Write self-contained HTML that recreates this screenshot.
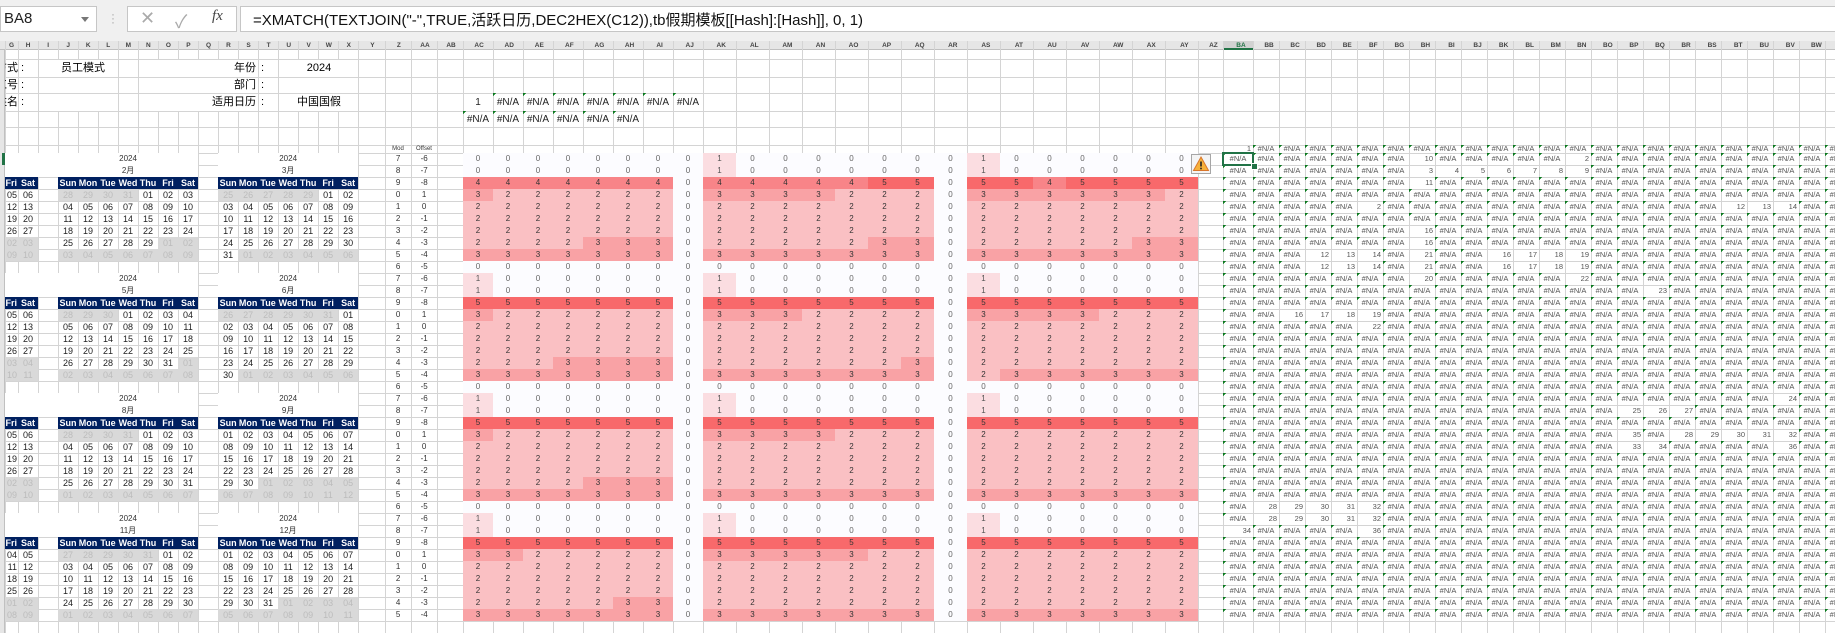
<!DOCTYPE html>
<html><head><meta charset="utf-8"><style>
body{margin:0;width:1835px;height:633px;overflow:hidden;position:relative;background:#fff;font-family:"Liberation Sans","Noto Sans CJK SC",sans-serif}
.a{position:absolute}
table{border-collapse:collapse;table-layout:fixed;position:absolute;border-spacing:0}
td{padding:0;overflow:hidden;white-space:nowrap;text-align:center}
#L td{font-size:9px;color:#222;height:12px;line-height:12px}
#L .y{font-size:8px;color:#333;background:#fff}
#L .wb{background:#fff}
#L tr.h td{background:#002060;color:#fff;font-weight:bold}
#L tr.h td.w{background:transparent;color:#333;font-weight:normal}
#L .x{background:#d9d9d9;color:#bcbcbc}
#L .g{text-align:right;padding-right:1px}
#L .m{font-size:8px;color:#333}
#H td{height:12px;font-size:8px;line-height:12px;background:#fcfcff;color:#666}
#H .b{background:#fbdde1;color:#555}#H .c{background:#fac0c3;color:#333}#H .d{background:#f9a2a5;color:#333}#H .e{background:#f88488;color:#333}#H .f{background:#f8696b;color:#333}
#R td{font-size:7.5px;color:#555;height:12px;line-height:12px;background:linear-gradient(135deg,#0a7a1e 0,#0a7a1e 2.2px,transparent 2.3px)}
#R tr.t td{height:8px;line-height:8px}
#R .n{background:none;text-align:right;padding-right:2px}
#T td{font-size:10px;color:#222;background:linear-gradient(135deg,#0a7a1e 0,#0a7a1e 2.2px,transparent 2.3px)}
#T .n{background:none}
#C td{font-size:6.5px;font-weight:bold;color:#444;height:9px;line-height:9px}
.lb{font-size:11px;color:#000;line-height:16px}
</style></head><body>
<!-- chrome -->
<div class="a" style="left:0;top:0;width:1835px;height:41px;background:#f0f0f0"></div>
<div class="a" style="left:0;top:6px;width:95px;height:24px;background:#fff;border:1px solid #c6c6c6;font-size:15px;line-height:24px;text-indent:3px;color:#222">BA8<span class="a" style="left:80px;top:10px;width:0;height:0;border-left:4px solid transparent;border-right:4px solid transparent;border-top:5px solid #777"></span></div>
<div class="a" style="left:111px;top:12px;color:#aaa;font-size:12px;line-height:4px">·<br>·<br>·</div>
<div class="a" style="left:127px;top:6px;width:108px;height:24px;background:#fff;border:1px solid #c6c6c6"></div>
<div class="a" style="left:140px;top:8px;font-size:18px;color:#aaa">✕</div>
<div class="a" style="left:175px;top:8px;font-size:18px;color:#aaa">✓</div>
<div class="a" style="left:212px;top:8px;font-size:15px;color:#444;font-family:'Liberation Serif',serif;font-style:italic">fx</div>
<div class="a" style="left:240px;top:6px;width:1600px;height:24px;background:#fff;border:1px solid #c6c6c6"></div>
<div class="a" style="left:253px;top:9px;font-size:15px;color:#111;white-space:nowrap">=XMATCH(TEXTJOIN("-",TRUE,活跃日历,DEC2HEX(C12)),tb假期模板[[Hash]:[Hash]], 0, 1)</div>
<div class="a" style="left:0;top:41px;width:1835px;height:9px;background:#e6e6e6;border-bottom:1px solid #c0c0c0;box-sizing:border-box"></div>
<div class="a" style="left:1223px;top:41px;width:30px;height:9px;background:#d2d2d2;border-bottom:2px solid #217346;box-sizing:border-box"></div>
<div class="a" style="left:0;top:50px;width:5px;height:583px;background:#e6e6e6;border-right:1px solid #c0c0c0;box-sizing:border-box"></div>
<div class="a" style="left:2px;top:153px;width:3px;height:12px;background:#217346"></div>
<!-- grid -->
<svg class="a" style="left:0;top:0" width="1835" height="633" shape-rendering="crispEdges">
<g stroke="#d4d4d4" stroke-width="1">
<path d="M5.5 41V633M18.5 41V633M38.5 41V633M58.5 41V633M78.5 41V633M98.5 41V633M118.5 41V633M138.5 41V633M158.5 41V633M178.5 41V633M198.5 41V633M218.5 41V633M238.5 41V633M258.5 41V633M278.5 41V633M298.5 41V633M318.5 41V633M338.5 41V633M358.5 41V633M385.5 41V633M411.5 41V633M437.5 41V633M463.5 41V633M493.5 41V633M523.5 41V633M553.5 41V633M583.5 41V633M613.5 41V633M643.5 41V633M673.5 41V633M703.5 41V633M736.5 41V633M769.5 41V633M802.5 41V633M835.5 41V633M868.5 41V633M901.5 41V633M934.5 41V633M967.5 41V633M1000.5 41V633M1033.5 41V633M1066.5 41V633M1099.5 41V633M1132.5 41V633M1165.5 41V633M1198.5 41V633M1223.5 41V633M1253.5 41V633M1279.5 41V633M1305.5 41V633M1331.5 41V633M1357.5 41V633M1383.5 41V633M1409.5 41V633M1435.5 41V633M1461.5 41V633M1487.5 41V633M1513.5 41V633M1539.5 41V633M1565.5 41V633M1591.5 41V633M1617.5 41V633M1643.5 41V633M1669.5 41V633M1695.5 41V633M1721.5 41V633M1747.5 41V633M1773.5 41V633M1799.5 41V633M1825.5 41V633"/>
<path d="M5 59.5H1835M5 77.5H1835M5 93.5H1835M5 111.5H1835M5 127.5H1835M5 145.5H1835M5 153.5H1835M5 165.5H1835M5 177.5H1835M5 189.5H1835M5 201.5H1835M5 213.5H1835M5 225.5H1835M5 237.5H1835M5 249.5H1835M5 261.5H1835M5 273.5H1835M5 285.5H1835M5 297.5H1835M5 309.5H1835M5 321.5H1835M5 333.5H1835M5 345.5H1835M5 357.5H1835M5 369.5H1835M5 381.5H1835M5 393.5H1835M5 405.5H1835M5 417.5H1835M5 429.5H1835M5 441.5H1835M5 453.5H1835M5 465.5H1835M5 477.5H1835M5 489.5H1835M5 501.5H1835M5 513.5H1835M5 525.5H1835M5 537.5H1835M5 549.5H1835M5 561.5H1835M5 573.5H1835M5 585.5H1835M5 597.5H1835M5 609.5H1835M5 621.5H1835"/>
</g>
<g fill="#fff">
<rect x="39" y="60" width="79" height="17"/><rect x="39" y="78" width="79" height="15"/><rect x="39" y="94" width="79" height="17"/>
<rect x="139" y="60" width="119" height="17"/><rect x="139" y="78" width="119" height="15"/><rect x="139" y="94" width="119" height="17"/>
<rect x="279" y="60" width="79" height="17"/><rect x="279" y="78" width="79" height="15"/><rect x="279" y="94" width="79" height="17"/>
</g>
</svg>
<!-- column headers -->
<table id="C" style="left:5px;top:41px;width:1846px"><colgroup><col style="width:13px"><col style="width:20px"><col style="width:20px"><col style="width:20px"><col style="width:20px"><col style="width:20px"><col style="width:20px"><col style="width:20px"><col style="width:20px"><col style="width:20px"><col style="width:20px"><col style="width:20px"><col style="width:20px"><col style="width:20px"><col style="width:20px"><col style="width:20px"><col style="width:20px"><col style="width:20px"><col style="width:27px"><col style="width:26px"><col style="width:26px"><col style="width:26px"><col style="width:30px"><col style="width:30px"><col style="width:30px"><col style="width:30px"><col style="width:30px"><col style="width:30px"><col style="width:30px"><col style="width:30px"><col style="width:33px"><col style="width:33px"><col style="width:33px"><col style="width:33px"><col style="width:33px"><col style="width:33px"><col style="width:33px"><col style="width:33px"><col style="width:33px"><col style="width:33px"><col style="width:33px"><col style="width:33px"><col style="width:33px"><col style="width:33px"><col style="width:33px"><col style="width:25px"><col style="width:30px"><col style="width:26px"><col style="width:26px"><col style="width:26px"><col style="width:26px"><col style="width:26px"><col style="width:26px"><col style="width:26px"><col style="width:26px"><col style="width:26px"><col style="width:26px"><col style="width:26px"><col style="width:26px"><col style="width:26px"><col style="width:26px"><col style="width:26px"><col style="width:26px"><col style="width:26px"><col style="width:26px"><col style="width:26px"><col style="width:26px"><col style="width:26px"><col style="width:26px"><col style="width:21px"></colgroup>
<tr><td>G<td>H<td>I<td>J<td>K<td>L<td>M<td>N<td>O<td>P<td>Q<td>R<td>S<td>T<td>U<td>V<td>W<td>X<td>Y<td>Z<td>AA<td>AB<td>AC<td>AD<td>AE<td>AF<td>AG<td>AH<td>AI<td>AJ<td>AK<td>AL<td>AM<td>AN<td>AO<td>AP<td>AQ<td>AR<td>AS<td>AT<td>AU<td>AV<td>AW<td>AX<td>AY<td>AZ<td style="color:#217346">BA<td>BB<td>BC<td>BD<td>BE<td>BF<td>BG<td>BH<td>BI<td>BJ<td>BK<td>BL<td>BM<td>BN<td>BO<td>BP<td>BQ<td>BR<td>BS<td>BT<td>BU<td>BV<td>BW<td>BX</tr></table>
<!-- labels -->
<div class="a lb" style="left:5px;top:60px;width:13px;overflow:hidden;text-align:right;white-space:nowrap;direction:rtl">方式</div>
<div class="a lb" style="left:5px;top:77px;width:13px;overflow:hidden;text-align:right;white-space:nowrap;direction:rtl">工号</div>
<div class="a lb" style="left:5px;top:94px;width:13px;overflow:hidden;text-align:right;white-space:nowrap;direction:rtl">姓名</div>
<div class="a lb" style="left:21px;top:60px">:</div><div class="a lb" style="left:21px;top:77px">:</div><div class="a lb" style="left:21px;top:94px">:</div>
<div class="a lb" style="left:61px;top:60px">员工模式</div>
<div class="a lb" style="left:160px;top:60px;width:96px;text-align:right">年份</div>
<div class="a lb" style="left:160px;top:77px;width:96px;text-align:right">部门</div>
<div class="a lb" style="left:160px;top:94px;width:96px;text-align:right">适用日历</div>
<div class="a lb" style="left:261px;top:60px">:</div><div class="a lb" style="left:261px;top:77px">:</div><div class="a lb" style="left:261px;top:94px">:</div>
<div class="a lb" style="left:279px;top:60px;width:80px;text-align:center">2024</div>
<div class="a lb" style="left:279px;top:94px;width:80px;text-align:center">中国国假</div>
<div class="a" style="left:385px;top:145px;width:26px;text-align:center;font-size:6px;line-height:8px;color:#333">Mod</div>
<div class="a" style="left:411px;top:145px;width:26px;text-align:center;font-size:6px;line-height:8px;color:#333">Offset</div>
<table id="T" style="left:463px;top:93px;width:240px"><colgroup><col span="8" style="width:30px"></colgroup>
<tr style="height:18px"><td class="n">1<td>#N/A<td>#N/A<td>#N/A<td>#N/A<td>#N/A<td>#N/A<td>#N/A</tr>
<tr style="height:16px"><td>#N/A<td>#N/A<td>#N/A<td>#N/A<td>#N/A<td>#N/A<td class="n"><td class="n"></tr></table>
<!-- calendar -->
<table id="L" style="left:5px;top:153px;width:458px"><colgroup><col style="width:13px"><col span="17" style="width:20px"><col style="width:27px"><col span="3" style="width:26px"></colgroup>
<tr><td colspan="3" class="wb"><td colspan="7" class="y">2024<td><td colspan="7" class="y">2024<td><td class="m">7<td class="m">-6<td>
<tr><td colspan="3" class="wb"><td colspan="7" class="y">2月<td><td colspan="7" class="y">3月<td><td class="m">8<td class="m">-7<td>
<tr class="h"><td class="g">Fri<td>Sat<td class="w"><td>Sun<td>Mon<td>Tue<td>Wed<td>Thu<td>Fri<td>Sat<td class="w"><td>Sun<td>Mon<td>Tue<td>Wed<td>Thu<td>Fri<td>Sat<td class="w"><td class="w m">9<td class="w m">-8<td class="w">
<tr><td class="g">05<td>06<td><td class="x">28<td class="x">29<td class="x">30<td class="x">31<td>01<td>02<td>03<td><td class="x">25<td class="x">26<td class="x">27<td class="x">28<td class="x">29<td>01<td>02<td><td class="m">0<td class="m">1<td>
<tr><td class="g">12<td>13<td><td>04<td>05<td>06<td>07<td>08<td>09<td>10<td><td>03<td>04<td>05<td>06<td>07<td>08<td>09<td><td class="m">1<td class="m">0<td>
<tr><td class="g">19<td>20<td><td>11<td>12<td>13<td>14<td>15<td>16<td>17<td><td>10<td>11<td>12<td>13<td>14<td>15<td>16<td><td class="m">2<td class="m">-1<td>
<tr><td class="g">26<td>27<td><td>18<td>19<td>20<td>21<td>22<td>23<td>24<td><td>17<td>18<td>19<td>20<td>21<td>22<td>23<td><td class="m">3<td class="m">-2<td>
<tr><td class="g x">02<td class="x">03<td><td>25<td>26<td>27<td>28<td>29<td class="x">01<td class="x">02<td><td>24<td>25<td>26<td>27<td>28<td>29<td>30<td><td class="m">4<td class="m">-3<td>
<tr><td class="g x">09<td class="x">10<td><td class="x">03<td class="x">04<td class="x">05<td class="x">06<td class="x">07<td class="x">08<td class="x">09<td><td>31<td class="x">01<td class="x">02<td class="x">03<td class="x">04<td class="x">05<td class="x">06<td><td class="m">5<td class="m">-4<td>
<tr><td><td><td><td><td><td><td><td><td><td><td><td><td><td><td><td><td><td><td><td class="m">6<td class="m">-5<td>

<tr><td colspan="3" class="wb"><td colspan="7" class="y">2024<td><td colspan="7" class="y">2024<td><td class="m">7<td class="m">-6<td>
<tr><td colspan="3" class="wb"><td colspan="7" class="y">5月<td><td colspan="7" class="y">6月<td><td class="m">8<td class="m">-7<td>
<tr class="h"><td class="g">Fri<td>Sat<td class="w"><td>Sun<td>Mon<td>Tue<td>Wed<td>Thu<td>Fri<td>Sat<td class="w"><td>Sun<td>Mon<td>Tue<td>Wed<td>Thu<td>Fri<td>Sat<td class="w"><td class="w m">9<td class="w m">-8<td class="w">
<tr><td class="g">05<td>06<td><td class="x">28<td class="x">29<td class="x">30<td>01<td>02<td>03<td>04<td><td class="x">26<td class="x">27<td class="x">28<td class="x">29<td class="x">30<td class="x">31<td>01<td><td class="m">0<td class="m">1<td>
<tr><td class="g">12<td>13<td><td>05<td>06<td>07<td>08<td>09<td>10<td>11<td><td>02<td>03<td>04<td>05<td>06<td>07<td>08<td><td class="m">1<td class="m">0<td>
<tr><td class="g">19<td>20<td><td>12<td>13<td>14<td>15<td>16<td>17<td>18<td><td>09<td>10<td>11<td>12<td>13<td>14<td>15<td><td class="m">2<td class="m">-1<td>
<tr><td class="g">26<td>27<td><td>19<td>20<td>21<td>22<td>23<td>24<td>25<td><td>16<td>17<td>18<td>19<td>20<td>21<td>22<td><td class="m">3<td class="m">-2<td>
<tr><td class="g x">03<td class="x">04<td><td>26<td>27<td>28<td>29<td>30<td>31<td class="x">01<td><td>23<td>24<td>25<td>26<td>27<td>28<td>29<td><td class="m">4<td class="m">-3<td>
<tr><td class="g x">10<td class="x">11<td><td class="x">02<td class="x">03<td class="x">04<td class="x">05<td class="x">06<td class="x">07<td class="x">08<td><td>30<td class="x">01<td class="x">02<td class="x">03<td class="x">04<td class="x">05<td class="x">06<td><td class="m">5<td class="m">-4<td>
<tr><td><td><td><td><td><td><td><td><td><td><td><td><td><td><td><td><td><td><td><td class="m">6<td class="m">-5<td>

<tr><td colspan="3" class="wb"><td colspan="7" class="y">2024<td><td colspan="7" class="y">2024<td><td class="m">7<td class="m">-6<td>
<tr><td colspan="3" class="wb"><td colspan="7" class="y">8月<td><td colspan="7" class="y">9月<td><td class="m">8<td class="m">-7<td>
<tr class="h"><td class="g">Fri<td>Sat<td class="w"><td>Sun<td>Mon<td>Tue<td>Wed<td>Thu<td>Fri<td>Sat<td class="w"><td>Sun<td>Mon<td>Tue<td>Wed<td>Thu<td>Fri<td>Sat<td class="w"><td class="w m">9<td class="w m">-8<td class="w">
<tr><td class="g">05<td>06<td><td class="x">28<td class="x">29<td class="x">30<td class="x">31<td>01<td>02<td>03<td><td>01<td>02<td>03<td>04<td>05<td>06<td>07<td><td class="m">0<td class="m">1<td>
<tr><td class="g">12<td>13<td><td>04<td>05<td>06<td>07<td>08<td>09<td>10<td><td>08<td>09<td>10<td>11<td>12<td>13<td>14<td><td class="m">1<td class="m">0<td>
<tr><td class="g">19<td>20<td><td>11<td>12<td>13<td>14<td>15<td>16<td>17<td><td>15<td>16<td>17<td>18<td>19<td>20<td>21<td><td class="m">2<td class="m">-1<td>
<tr><td class="g">26<td>27<td><td>18<td>19<td>20<td>21<td>22<td>23<td>24<td><td>22<td>23<td>24<td>25<td>26<td>27<td>28<td><td class="m">3<td class="m">-2<td>
<tr><td class="g x">02<td class="x">03<td><td>25<td>26<td>27<td>28<td>29<td>30<td>31<td><td>29<td>30<td class="x">01<td class="x">02<td class="x">03<td class="x">04<td class="x">05<td><td class="m">4<td class="m">-3<td>
<tr><td class="g x">09<td class="x">10<td><td class="x">01<td class="x">02<td class="x">03<td class="x">04<td class="x">05<td class="x">06<td class="x">07<td><td class="x">06<td class="x">07<td class="x">08<td class="x">09<td class="x">10<td class="x">11<td class="x">12<td><td class="m">5<td class="m">-4<td>
<tr><td><td><td><td><td><td><td><td><td><td><td><td><td><td><td><td><td><td><td><td class="m">6<td class="m">-5<td>

<tr><td colspan="3" class="wb"><td colspan="7" class="y">2024<td><td colspan="7" class="y">2024<td><td class="m">7<td class="m">-6<td>
<tr><td colspan="3" class="wb"><td colspan="7" class="y">11月<td><td colspan="7" class="y">12月<td><td class="m">8<td class="m">-7<td>
<tr class="h"><td class="g">Fri<td>Sat<td class="w"><td>Sun<td>Mon<td>Tue<td>Wed<td>Thu<td>Fri<td>Sat<td class="w"><td>Sun<td>Mon<td>Tue<td>Wed<td>Thu<td>Fri<td>Sat<td class="w"><td class="w m">9<td class="w m">-8<td class="w">
<tr><td class="g">04<td>05<td><td class="x">27<td class="x">28<td class="x">29<td class="x">30<td class="x">31<td>01<td>02<td><td>01<td>02<td>03<td>04<td>05<td>06<td>07<td><td class="m">0<td class="m">1<td>
<tr><td class="g">11<td>12<td><td>03<td>04<td>05<td>06<td>07<td>08<td>09<td><td>08<td>09<td>10<td>11<td>12<td>13<td>14<td><td class="m">1<td class="m">0<td>
<tr><td class="g">18<td>19<td><td>10<td>11<td>12<td>13<td>14<td>15<td>16<td><td>15<td>16<td>17<td>18<td>19<td>20<td>21<td><td class="m">2<td class="m">-1<td>
<tr><td class="g">25<td>26<td><td>17<td>18<td>19<td>20<td>21<td>22<td>23<td><td>22<td>23<td>24<td>25<td>26<td>27<td>28<td><td class="m">3<td class="m">-2<td>
<tr><td class="g x">01<td class="x">02<td><td>24<td>25<td>26<td>27<td>28<td>29<td>30<td><td>29<td>30<td>31<td class="x">01<td class="x">02<td class="x">03<td class="x">04<td><td class="m">4<td class="m">-3<td>
<tr><td class="g x">08<td class="x">09<td><td class="x">01<td class="x">02<td class="x">03<td class="x">04<td class="x">05<td class="x">06<td class="x">07<td><td class="x">05<td class="x">06<td class="x">07<td class="x">08<td class="x">09<td class="x">10<td class="x">11<td><td class="m">5<td class="m">-4<td>
</table>
<!-- heatmap -->
<table id="H" style="left:463px;top:153px;width:735px"><colgroup><col span="8" style="width:30px"><col span="15" style="width:33px"></colgroup>
<tr><td>0<td>0<td>0<td>0<td>0<td>0<td>0<td>0<td class="b">1<td>0<td>0<td>0<td>0<td>0<td>0<td>0<td class="b">1<td>0<td>0<td>0<td>0<td>0<td>0
<tr><td>0<td>0<td>0<td>0<td>0<td>0<td>0<td>0<td class="b">1<td>0<td>0<td>0<td>0<td>0<td>0<td>0<td class="b">1<td>0<td>0<td>0<td>0<td>0<td>0
<tr><td class="e">4<td class="e">4<td class="e">4<td class="e">4<td class="e">4<td class="e">4<td class="e">4<td>0<td class="e">4<td class="e">4<td class="e">4<td class="e">4<td class="e">4<td class="f">5<td class="f">5<td>0<td class="f">5<td class="f">5<td class="e">4<td class="f">5<td class="f">5<td class="f">5<td class="f">5
<tr><td class="d">3<td class="c">2<td class="c">2<td class="c">2<td class="c">2<td class="c">2<td class="c">2<td>0<td class="d">3<td class="d">3<td class="d">3<td class="d">3<td class="c">2<td class="c">2<td class="c">2<td>0<td class="d">3<td class="d">3<td class="d">3<td class="d">3<td class="d">3<td class="d">3<td class="c">2
<tr><td class="c">2<td class="c">2<td class="c">2<td class="c">2<td class="c">2<td class="c">2<td class="c">2<td>0<td class="c">2<td class="c">2<td class="c">2<td class="c">2<td class="c">2<td class="c">2<td class="c">2<td>0<td class="c">2<td class="c">2<td class="c">2<td class="c">2<td class="c">2<td class="c">2<td class="c">2
<tr><td class="c">2<td class="c">2<td class="c">2<td class="c">2<td class="c">2<td class="c">2<td class="c">2<td>0<td class="c">2<td class="c">2<td class="c">2<td class="c">2<td class="c">2<td class="c">2<td class="c">2<td>0<td class="c">2<td class="c">2<td class="c">2<td class="c">2<td class="c">2<td class="c">2<td class="c">2
<tr><td class="c">2<td class="c">2<td class="c">2<td class="c">2<td class="c">2<td class="c">2<td class="c">2<td>0<td class="c">2<td class="c">2<td class="c">2<td class="c">2<td class="c">2<td class="c">2<td class="c">2<td>0<td class="c">2<td class="c">2<td class="c">2<td class="c">2<td class="c">2<td class="c">2<td class="c">2
<tr><td class="c">2<td class="c">2<td class="c">2<td class="c">2<td class="d">3<td class="d">3<td class="d">3<td>0<td class="c">2<td class="c">2<td class="c">2<td class="c">2<td class="c">2<td class="d">3<td class="d">3<td>0<td class="c">2<td class="c">2<td class="c">2<td class="c">2<td class="c">2<td class="d">3<td class="d">3
<tr><td class="d">3<td class="d">3<td class="d">3<td class="d">3<td class="d">3<td class="d">3<td class="d">3<td>0<td class="d">3<td class="d">3<td class="d">3<td class="d">3<td class="d">3<td class="d">3<td class="d">3<td>0<td class="d">3<td class="d">3<td class="d">3<td class="d">3<td class="d">3<td class="d">3<td class="d">3
<tr><td>0<td>0<td>0<td>0<td>0<td>0<td>0<td>0<td>0<td>0<td>0<td>0<td>0<td>0<td>0<td>0<td>0<td>0<td>0<td>0<td>0<td>0<td>0

<tr><td class="b">1<td>0<td>0<td>0<td>0<td>0<td>0<td>0<td class="b">1<td>0<td>0<td>0<td>0<td>0<td>0<td>0<td class="b">1<td>0<td>0<td>0<td>0<td>0<td>0
<tr><td class="b">1<td>0<td>0<td>0<td>0<td>0<td>0<td>0<td class="b">1<td>0<td>0<td>0<td>0<td>0<td>0<td>0<td class="b">1<td>0<td>0<td>0<td>0<td>0<td>0
<tr><td class="f">5<td class="f">5<td class="f">5<td class="f">5<td class="f">5<td class="f">5<td class="f">5<td>0<td class="f">5<td class="f">5<td class="f">5<td class="f">5<td class="f">5<td class="f">5<td class="f">5<td>0<td class="f">5<td class="f">5<td class="f">5<td class="f">5<td class="f">5<td class="f">5<td class="f">5
<tr><td class="d">3<td class="c">2<td class="c">2<td class="c">2<td class="c">2<td class="c">2<td class="c">2<td>0<td class="d">3<td class="d">3<td class="d">3<td class="c">2<td class="c">2<td class="c">2<td class="c">2<td>0<td class="d">3<td class="d">3<td class="d">3<td class="d">3<td class="c">2<td class="c">2<td class="c">2
<tr><td class="c">2<td class="c">2<td class="c">2<td class="c">2<td class="c">2<td class="c">2<td class="c">2<td>0<td class="c">2<td class="c">2<td class="c">2<td class="c">2<td class="c">2<td class="c">2<td class="c">2<td>0<td class="c">2<td class="c">2<td class="c">2<td class="c">2<td class="c">2<td class="c">2<td class="c">2
<tr><td class="c">2<td class="c">2<td class="c">2<td class="c">2<td class="c">2<td class="c">2<td class="c">2<td>0<td class="c">2<td class="c">2<td class="c">2<td class="c">2<td class="c">2<td class="c">2<td class="c">2<td>0<td class="c">2<td class="c">2<td class="c">2<td class="c">2<td class="c">2<td class="c">2<td class="c">2
<tr><td class="c">2<td class="c">2<td class="c">2<td class="c">2<td class="c">2<td class="c">2<td class="c">2<td>0<td class="c">2<td class="c">2<td class="c">2<td class="c">2<td class="c">2<td class="c">2<td class="c">2<td>0<td class="c">2<td class="c">2<td class="c">2<td class="c">2<td class="c">2<td class="c">2<td class="c">2
<tr><td class="c">2<td class="c">2<td class="c">2<td class="d">3<td class="d">3<td class="d">3<td class="d">3<td>0<td class="c">2<td class="c">2<td class="c">2<td class="c">2<td class="c">2<td class="c">2<td class="d">3<td>0<td class="c">2<td class="c">2<td class="c">2<td class="c">2<td class="c">2<td class="c">2<td class="c">2
<tr><td class="d">3<td class="d">3<td class="d">3<td class="d">3<td class="d">3<td class="d">3<td class="d">3<td>0<td class="d">3<td class="d">3<td class="d">3<td class="d">3<td class="d">3<td class="d">3<td class="d">3<td>0<td class="c">2<td class="d">3<td class="d">3<td class="d">3<td class="d">3<td class="d">3<td class="d">3
<tr><td>0<td>0<td>0<td>0<td>0<td>0<td>0<td>0<td>0<td>0<td>0<td>0<td>0<td>0<td>0<td>0<td>0<td>0<td>0<td>0<td>0<td>0<td>0

<tr><td class="b">1<td>0<td>0<td>0<td>0<td>0<td>0<td>0<td class="b">1<td>0<td>0<td>0<td>0<td>0<td>0<td>0<td class="b">1<td>0<td>0<td>0<td>0<td>0<td>0
<tr><td class="b">1<td>0<td>0<td>0<td>0<td>0<td>0<td>0<td class="b">1<td>0<td>0<td>0<td>0<td>0<td>0<td>0<td class="b">1<td>0<td>0<td>0<td>0<td>0<td>0
<tr><td class="f">5<td class="f">5<td class="f">5<td class="f">5<td class="f">5<td class="f">5<td class="f">5<td>0<td class="f">5<td class="f">5<td class="f">5<td class="f">5<td class="f">5<td class="f">5<td class="f">5<td>0<td class="f">5<td class="f">5<td class="f">5<td class="f">5<td class="f">5<td class="f">5<td class="f">5
<tr><td class="d">3<td class="c">2<td class="c">2<td class="c">2<td class="c">2<td class="c">2<td class="c">2<td>0<td class="d">3<td class="d">3<td class="d">3<td class="d">3<td class="c">2<td class="c">2<td class="c">2<td>0<td class="c">2<td class="c">2<td class="c">2<td class="c">2<td class="c">2<td class="c">2<td class="c">2
<tr><td class="c">2<td class="c">2<td class="c">2<td class="c">2<td class="c">2<td class="c">2<td class="c">2<td>0<td class="c">2<td class="c">2<td class="c">2<td class="c">2<td class="c">2<td class="c">2<td class="c">2<td>0<td class="c">2<td class="c">2<td class="c">2<td class="c">2<td class="c">2<td class="c">2<td class="c">2
<tr><td class="c">2<td class="c">2<td class="c">2<td class="c">2<td class="c">2<td class="c">2<td class="c">2<td>0<td class="c">2<td class="c">2<td class="c">2<td class="c">2<td class="c">2<td class="c">2<td class="c">2<td>0<td class="c">2<td class="c">2<td class="c">2<td class="c">2<td class="c">2<td class="c">2<td class="c">2
<tr><td class="c">2<td class="c">2<td class="c">2<td class="c">2<td class="c">2<td class="c">2<td class="c">2<td>0<td class="c">2<td class="c">2<td class="c">2<td class="c">2<td class="c">2<td class="c">2<td class="c">2<td>0<td class="c">2<td class="c">2<td class="c">2<td class="c">2<td class="c">2<td class="c">2<td class="c">2
<tr><td class="c">2<td class="c">2<td class="c">2<td class="c">2<td class="d">3<td class="d">3<td class="d">3<td>0<td class="c">2<td class="c">2<td class="c">2<td class="c">2<td class="c">2<td class="c">2<td class="c">2<td>0<td class="c">2<td class="c">2<td class="c">2<td class="c">2<td class="c">2<td class="c">2<td class="c">2
<tr><td class="d">3<td class="d">3<td class="d">3<td class="d">3<td class="d">3<td class="d">3<td class="d">3<td>0<td class="d">3<td class="d">3<td class="d">3<td class="d">3<td class="d">3<td class="d">3<td class="d">3<td>0<td class="d">3<td class="d">3<td class="d">3<td class="d">3<td class="d">3<td class="d">3<td class="d">3
<tr><td>0<td>0<td>0<td>0<td>0<td>0<td>0<td>0<td>0<td>0<td>0<td>0<td>0<td>0<td>0<td>0<td>0<td>0<td>0<td>0<td>0<td>0<td>0

<tr><td class="b">1<td>0<td>0<td>0<td>0<td>0<td>0<td>0<td class="b">1<td>0<td>0<td>0<td>0<td>0<td>0<td>0<td class="b">1<td>0<td>0<td>0<td>0<td>0<td>0
<tr><td class="b">1<td>0<td>0<td>0<td>0<td>0<td>0<td>0<td class="b">1<td>0<td>0<td>0<td>0<td>0<td>0<td>0<td class="b">1<td>0<td>0<td>0<td>0<td>0<td>0
<tr><td class="f">5<td class="f">5<td class="f">5<td class="f">5<td class="f">5<td class="f">5<td class="f">5<td>0<td class="f">5<td class="f">5<td class="f">5<td class="f">5<td class="f">5<td class="f">5<td class="f">5<td>0<td class="f">5<td class="f">5<td class="f">5<td class="f">5<td class="f">5<td class="f">5<td class="f">5
<tr><td class="d">3<td class="d">3<td class="c">2<td class="c">2<td class="c">2<td class="c">2<td class="c">2<td>0<td class="d">3<td class="d">3<td class="d">3<td class="d">3<td class="d">3<td class="c">2<td class="c">2<td>0<td class="c">2<td class="c">2<td class="c">2<td class="c">2<td class="c">2<td class="c">2<td class="c">2
<tr><td class="c">2<td class="c">2<td class="c">2<td class="c">2<td class="c">2<td class="c">2<td class="c">2<td>0<td class="c">2<td class="c">2<td class="c">2<td class="c">2<td class="c">2<td class="c">2<td class="c">2<td>0<td class="c">2<td class="c">2<td class="c">2<td class="c">2<td class="c">2<td class="c">2<td class="c">2
<tr><td class="c">2<td class="c">2<td class="c">2<td class="c">2<td class="c">2<td class="c">2<td class="c">2<td>0<td class="c">2<td class="c">2<td class="c">2<td class="c">2<td class="c">2<td class="c">2<td class="c">2<td>0<td class="c">2<td class="c">2<td class="c">2<td class="c">2<td class="c">2<td class="c">2<td class="c">2
<tr><td class="c">2<td class="c">2<td class="c">2<td class="c">2<td class="c">2<td class="c">2<td class="c">2<td>0<td class="c">2<td class="c">2<td class="c">2<td class="c">2<td class="c">2<td class="c">2<td class="c">2<td>0<td class="c">2<td class="c">2<td class="c">2<td class="c">2<td class="c">2<td class="c">2<td class="c">2
<tr><td class="c">2<td class="c">2<td class="c">2<td class="c">2<td class="c">2<td class="d">3<td class="d">3<td>0<td class="c">2<td class="c">2<td class="c">2<td class="c">2<td class="c">2<td class="c">2<td class="c">2<td>0<td class="c">2<td class="c">2<td class="c">2<td class="c">2<td class="c">2<td class="c">2<td class="c">2
<tr><td class="d">3<td class="d">3<td class="d">3<td class="d">3<td class="d">3<td class="d">3<td class="d">3<td>0<td class="d">3<td class="d">3<td class="d">3<td class="d">3<td class="d">3<td class="d">3<td class="d">3<td>0<td class="d">3<td class="d">3<td class="d">3<td class="d">3<td class="d">3<td class="d">3<td class="d">3
</table>
<!-- warning icon -->
<svg class="a" style="left:1191px;top:154px" width="20" height="20"><rect x="0.5" y="0.5" width="19" height="19" fill="#f4f4f4" stroke="#a6a6a6"/><path d="M10 3L17.5 16.5H2.5Z" fill="#f6b13a" stroke="#d9762b" stroke-width="1"/><path d="M10 7.5V12.5" stroke="#222" stroke-width="1.6"/><rect x="9.2" y="13.7" width="1.6" height="1.6" fill="#222"/></svg>
<!-- right grid -->
<div class="a" style="left:1223px;top:145px;width:612px;height:488px;overflow:hidden">
<table id="R" style="left:0;top:0;width:628px"><colgroup><col style="width:30px"><col span="23" style="width:26px"></colgroup>
<tr class="t"><td class="n">1<td>#N/A<td>#N/A<td>#N/A<td>#N/A<td>#N/A<td>#N/A<td>#N/A<td>#N/A<td>#N/A<td>#N/A<td>#N/A<td>#N/A<td>#N/A<td>#N/A<td>#N/A<td>#N/A<td>#N/A<td>#N/A<td>#N/A<td>#N/A<td>#N/A<td>#N/A<td>#N/A
<tr><td>#N/A<td>#N/A<td>#N/A<td>#N/A<td>#N/A<td>#N/A<td>#N/A<td class="n">10<td>#N/A<td>#N/A<td>#N/A<td>#N/A<td>#N/A<td class="n">2<td>#N/A<td>#N/A<td>#N/A<td>#N/A<td>#N/A<td>#N/A<td>#N/A<td>#N/A<td>#N/A<td>#N/A
<tr><td>#N/A<td>#N/A<td>#N/A<td>#N/A<td>#N/A<td>#N/A<td>#N/A<td class="n">3<td class="n">4<td class="n">5<td class="n">6<td class="n">7<td class="n">8<td class="n">9<td>#N/A<td>#N/A<td>#N/A<td>#N/A<td>#N/A<td>#N/A<td>#N/A<td>#N/A<td>#N/A<td>#N/A
<tr><td>#N/A<td>#N/A<td>#N/A<td>#N/A<td>#N/A<td>#N/A<td>#N/A<td class="n">11<td>#N/A<td>#N/A<td>#N/A<td>#N/A<td>#N/A<td>#N/A<td>#N/A<td>#N/A<td>#N/A<td>#N/A<td>#N/A<td>#N/A<td>#N/A<td>#N/A<td>#N/A<td>#N/A
<tr><td>#N/A<td>#N/A<td>#N/A<td>#N/A<td>#N/A<td>#N/A<td>#N/A<td>#N/A<td>#N/A<td>#N/A<td>#N/A<td>#N/A<td>#N/A<td>#N/A<td>#N/A<td>#N/A<td>#N/A<td>#N/A<td>#N/A<td>#N/A<td>#N/A<td>#N/A<td>#N/A<td>#N/A
<tr><td>#N/A<td>#N/A<td>#N/A<td>#N/A<td>#N/A<td class="n">2<td>#N/A<td>#N/A<td>#N/A<td>#N/A<td>#N/A<td>#N/A<td>#N/A<td>#N/A<td>#N/A<td>#N/A<td>#N/A<td>#N/A<td>#N/A<td class="n">12<td class="n">13<td class="n">14<td>#N/A<td>#N/A
<tr><td>#N/A<td>#N/A<td>#N/A<td>#N/A<td>#N/A<td>#N/A<td>#N/A<td>#N/A<td>#N/A<td>#N/A<td>#N/A<td>#N/A<td>#N/A<td>#N/A<td>#N/A<td>#N/A<td>#N/A<td>#N/A<td>#N/A<td>#N/A<td>#N/A<td>#N/A<td>#N/A<td>#N/A
<tr><td>#N/A<td>#N/A<td>#N/A<td>#N/A<td>#N/A<td>#N/A<td>#N/A<td class="n">16<td>#N/A<td>#N/A<td>#N/A<td>#N/A<td>#N/A<td>#N/A<td>#N/A<td>#N/A<td>#N/A<td>#N/A<td>#N/A<td>#N/A<td>#N/A<td>#N/A<td>#N/A<td>#N/A
<tr><td>#N/A<td>#N/A<td>#N/A<td>#N/A<td>#N/A<td>#N/A<td>#N/A<td class="n">16<td>#N/A<td>#N/A<td>#N/A<td>#N/A<td>#N/A<td>#N/A<td>#N/A<td>#N/A<td>#N/A<td>#N/A<td>#N/A<td>#N/A<td>#N/A<td>#N/A<td>#N/A<td>#N/A
<tr><td>#N/A<td>#N/A<td>#N/A<td class="n">12<td class="n">13<td class="n">14<td>#N/A<td class="n">21<td>#N/A<td>#N/A<td class="n">16<td class="n">17<td class="n">18<td class="n">19<td>#N/A<td>#N/A<td>#N/A<td>#N/A<td>#N/A<td>#N/A<td>#N/A<td>#N/A<td>#N/A<td>#N/A
<tr><td>#N/A<td>#N/A<td>#N/A<td class="n">12<td class="n">13<td class="n">14<td>#N/A<td class="n">21<td>#N/A<td>#N/A<td class="n">16<td class="n">17<td class="n">18<td class="n">19<td>#N/A<td>#N/A<td>#N/A<td>#N/A<td>#N/A<td>#N/A<td>#N/A<td>#N/A<td>#N/A<td>#N/A
<tr><td>#N/A<td>#N/A<td>#N/A<td>#N/A<td>#N/A<td>#N/A<td>#N/A<td class="n">20<td>#N/A<td>#N/A<td>#N/A<td>#N/A<td>#N/A<td class="n">22<td>#N/A<td>#N/A<td>#N/A<td>#N/A<td>#N/A<td>#N/A<td>#N/A<td>#N/A<td>#N/A<td>#N/A
<tr><td>#N/A<td>#N/A<td>#N/A<td>#N/A<td>#N/A<td>#N/A<td>#N/A<td>#N/A<td>#N/A<td>#N/A<td>#N/A<td>#N/A<td>#N/A<td>#N/A<td>#N/A<td>#N/A<td class="n">23<td>#N/A<td>#N/A<td>#N/A<td>#N/A<td>#N/A<td>#N/A<td>#N/A
<tr><td>#N/A<td>#N/A<td>#N/A<td>#N/A<td>#N/A<td>#N/A<td>#N/A<td>#N/A<td>#N/A<td>#N/A<td>#N/A<td>#N/A<td>#N/A<td>#N/A<td>#N/A<td>#N/A<td>#N/A<td>#N/A<td>#N/A<td>#N/A<td>#N/A<td>#N/A<td>#N/A<td>#N/A
<tr><td>#N/A<td>#N/A<td class="n">16<td class="n">17<td class="n">18<td class="n">19<td>#N/A<td>#N/A<td>#N/A<td>#N/A<td>#N/A<td>#N/A<td>#N/A<td>#N/A<td>#N/A<td>#N/A<td>#N/A<td>#N/A<td>#N/A<td>#N/A<td>#N/A<td>#N/A<td>#N/A<td>#N/A
<tr><td>#N/A<td>#N/A<td>#N/A<td>#N/A<td>#N/A<td class="n">22<td>#N/A<td>#N/A<td>#N/A<td>#N/A<td>#N/A<td>#N/A<td>#N/A<td>#N/A<td>#N/A<td>#N/A<td>#N/A<td>#N/A<td>#N/A<td>#N/A<td>#N/A<td>#N/A<td>#N/A<td>#N/A
<tr><td>#N/A<td>#N/A<td>#N/A<td>#N/A<td>#N/A<td>#N/A<td>#N/A<td>#N/A<td>#N/A<td>#N/A<td>#N/A<td>#N/A<td>#N/A<td>#N/A<td>#N/A<td>#N/A<td>#N/A<td>#N/A<td>#N/A<td>#N/A<td>#N/A<td>#N/A<td>#N/A<td>#N/A
<tr><td>#N/A<td>#N/A<td>#N/A<td>#N/A<td>#N/A<td>#N/A<td>#N/A<td>#N/A<td>#N/A<td>#N/A<td>#N/A<td>#N/A<td>#N/A<td>#N/A<td>#N/A<td>#N/A<td>#N/A<td>#N/A<td>#N/A<td>#N/A<td>#N/A<td>#N/A<td>#N/A<td>#N/A
<tr><td>#N/A<td>#N/A<td>#N/A<td>#N/A<td>#N/A<td>#N/A<td>#N/A<td>#N/A<td>#N/A<td>#N/A<td>#N/A<td>#N/A<td>#N/A<td>#N/A<td>#N/A<td>#N/A<td>#N/A<td>#N/A<td>#N/A<td>#N/A<td>#N/A<td>#N/A<td>#N/A<td>#N/A
<tr><td>#N/A<td>#N/A<td>#N/A<td>#N/A<td>#N/A<td>#N/A<td>#N/A<td>#N/A<td>#N/A<td>#N/A<td>#N/A<td>#N/A<td>#N/A<td>#N/A<td>#N/A<td>#N/A<td>#N/A<td>#N/A<td>#N/A<td>#N/A<td>#N/A<td>#N/A<td>#N/A<td>#N/A
<tr><td>#N/A<td>#N/A<td>#N/A<td>#N/A<td>#N/A<td>#N/A<td>#N/A<td>#N/A<td>#N/A<td>#N/A<td>#N/A<td>#N/A<td>#N/A<td>#N/A<td>#N/A<td>#N/A<td>#N/A<td>#N/A<td>#N/A<td>#N/A<td>#N/A<td>#N/A<td>#N/A<td>#N/A
<tr><td>#N/A<td>#N/A<td>#N/A<td>#N/A<td>#N/A<td>#N/A<td>#N/A<td>#N/A<td>#N/A<td>#N/A<td>#N/A<td>#N/A<td>#N/A<td>#N/A<td>#N/A<td>#N/A<td>#N/A<td>#N/A<td>#N/A<td>#N/A<td>#N/A<td class="n">24<td>#N/A<td>#N/A
<tr><td>#N/A<td>#N/A<td>#N/A<td>#N/A<td>#N/A<td>#N/A<td>#N/A<td>#N/A<td>#N/A<td>#N/A<td>#N/A<td>#N/A<td>#N/A<td>#N/A<td>#N/A<td class="n">25<td class="n">26<td class="n">27<td>#N/A<td>#N/A<td>#N/A<td>#N/A<td>#N/A<td>#N/A
<tr><td>#N/A<td>#N/A<td>#N/A<td>#N/A<td>#N/A<td>#N/A<td>#N/A<td>#N/A<td>#N/A<td>#N/A<td>#N/A<td>#N/A<td>#N/A<td>#N/A<td>#N/A<td>#N/A<td>#N/A<td>#N/A<td>#N/A<td>#N/A<td>#N/A<td>#N/A<td>#N/A<td>#N/A
<tr><td>#N/A<td>#N/A<td>#N/A<td>#N/A<td>#N/A<td>#N/A<td>#N/A<td>#N/A<td>#N/A<td>#N/A<td>#N/A<td>#N/A<td>#N/A<td>#N/A<td>#N/A<td class="n">35<td>#N/A<td class="n">28<td class="n">29<td class="n">30<td class="n">31<td class="n">32<td>#N/A<td>#N/A
<tr><td>#N/A<td>#N/A<td>#N/A<td>#N/A<td>#N/A<td>#N/A<td>#N/A<td>#N/A<td>#N/A<td>#N/A<td>#N/A<td>#N/A<td>#N/A<td>#N/A<td>#N/A<td class="n">33<td class="n">34<td>#N/A<td>#N/A<td>#N/A<td>#N/A<td class="n">36<td>#N/A<td>#N/A
<tr><td>#N/A<td>#N/A<td>#N/A<td>#N/A<td>#N/A<td>#N/A<td>#N/A<td>#N/A<td>#N/A<td>#N/A<td>#N/A<td>#N/A<td>#N/A<td>#N/A<td>#N/A<td>#N/A<td>#N/A<td>#N/A<td>#N/A<td>#N/A<td>#N/A<td>#N/A<td>#N/A<td>#N/A
<tr><td>#N/A<td>#N/A<td>#N/A<td>#N/A<td>#N/A<td>#N/A<td>#N/A<td>#N/A<td>#N/A<td>#N/A<td>#N/A<td>#N/A<td>#N/A<td>#N/A<td>#N/A<td>#N/A<td>#N/A<td>#N/A<td>#N/A<td>#N/A<td>#N/A<td>#N/A<td>#N/A<td>#N/A
<tr><td>#N/A<td>#N/A<td>#N/A<td>#N/A<td>#N/A<td>#N/A<td>#N/A<td>#N/A<td>#N/A<td>#N/A<td>#N/A<td>#N/A<td>#N/A<td>#N/A<td>#N/A<td>#N/A<td>#N/A<td>#N/A<td>#N/A<td>#N/A<td>#N/A<td>#N/A<td>#N/A<td>#N/A
<tr><td>#N/A<td>#N/A<td>#N/A<td>#N/A<td>#N/A<td>#N/A<td>#N/A<td>#N/A<td>#N/A<td>#N/A<td>#N/A<td>#N/A<td>#N/A<td>#N/A<td>#N/A<td>#N/A<td>#N/A<td>#N/A<td>#N/A<td>#N/A<td>#N/A<td>#N/A<td>#N/A<td>#N/A
<tr><td>#N/A<td class="n">28<td class="n">29<td class="n">30<td class="n">31<td class="n">32<td>#N/A<td>#N/A<td>#N/A<td>#N/A<td>#N/A<td>#N/A<td>#N/A<td>#N/A<td>#N/A<td>#N/A<td>#N/A<td>#N/A<td>#N/A<td>#N/A<td>#N/A<td>#N/A<td>#N/A<td>#N/A
<tr><td>#N/A<td class="n">28<td class="n">29<td class="n">30<td class="n">31<td class="n">32<td>#N/A<td>#N/A<td>#N/A<td>#N/A<td>#N/A<td>#N/A<td>#N/A<td>#N/A<td>#N/A<td>#N/A<td>#N/A<td>#N/A<td>#N/A<td>#N/A<td>#N/A<td>#N/A<td>#N/A<td>#N/A
<tr><td class="n">34<td>#N/A<td>#N/A<td>#N/A<td>#N/A<td class="n">36<td>#N/A<td>#N/A<td>#N/A<td>#N/A<td>#N/A<td>#N/A<td>#N/A<td>#N/A<td>#N/A<td>#N/A<td>#N/A<td>#N/A<td>#N/A<td>#N/A<td>#N/A<td>#N/A<td>#N/A<td>#N/A
<tr><td>#N/A<td>#N/A<td>#N/A<td>#N/A<td>#N/A<td>#N/A<td>#N/A<td>#N/A<td>#N/A<td>#N/A<td>#N/A<td>#N/A<td>#N/A<td>#N/A<td>#N/A<td>#N/A<td>#N/A<td>#N/A<td>#N/A<td>#N/A<td>#N/A<td>#N/A<td>#N/A<td>#N/A
<tr><td>#N/A<td>#N/A<td>#N/A<td>#N/A<td>#N/A<td>#N/A<td>#N/A<td>#N/A<td>#N/A<td>#N/A<td>#N/A<td>#N/A<td>#N/A<td>#N/A<td>#N/A<td>#N/A<td>#N/A<td>#N/A<td>#N/A<td>#N/A<td>#N/A<td>#N/A<td>#N/A<td>#N/A
<tr><td>#N/A<td>#N/A<td>#N/A<td>#N/A<td>#N/A<td>#N/A<td>#N/A<td>#N/A<td>#N/A<td>#N/A<td>#N/A<td>#N/A<td>#N/A<td>#N/A<td>#N/A<td>#N/A<td>#N/A<td>#N/A<td>#N/A<td>#N/A<td>#N/A<td>#N/A<td>#N/A<td>#N/A
<tr><td>#N/A<td>#N/A<td>#N/A<td>#N/A<td>#N/A<td>#N/A<td>#N/A<td>#N/A<td>#N/A<td>#N/A<td>#N/A<td>#N/A<td>#N/A<td>#N/A<td>#N/A<td>#N/A<td>#N/A<td>#N/A<td>#N/A<td>#N/A<td>#N/A<td>#N/A<td>#N/A<td>#N/A
<tr><td>#N/A<td>#N/A<td>#N/A<td>#N/A<td>#N/A<td>#N/A<td>#N/A<td>#N/A<td>#N/A<td>#N/A<td>#N/A<td>#N/A<td>#N/A<td>#N/A<td>#N/A<td>#N/A<td>#N/A<td>#N/A<td>#N/A<td>#N/A<td>#N/A<td>#N/A<td>#N/A<td>#N/A
<tr><td>#N/A<td>#N/A<td>#N/A<td>#N/A<td>#N/A<td>#N/A<td>#N/A<td>#N/A<td>#N/A<td>#N/A<td>#N/A<td>#N/A<td>#N/A<td>#N/A<td>#N/A<td>#N/A<td>#N/A<td>#N/A<td>#N/A<td>#N/A<td>#N/A<td>#N/A<td>#N/A<td>#N/A
<tr><td>#N/A<td>#N/A<td>#N/A<td>#N/A<td>#N/A<td>#N/A<td>#N/A<td>#N/A<td>#N/A<td>#N/A<td>#N/A<td>#N/A<td>#N/A<td>#N/A<td>#N/A<td>#N/A<td>#N/A<td>#N/A<td>#N/A<td>#N/A<td>#N/A<td>#N/A<td>#N/A<td>#N/A
</table></div>
<!-- selection -->
<div class="a" style="left:1222px;top:152px;width:32px;height:14px;border:2px solid #217346;box-sizing:border-box"></div>
<div class="a" style="left:1251px;top:163px;width:5px;height:5px;background:#217346;border:1px solid #fff"></div>
</body></html>
